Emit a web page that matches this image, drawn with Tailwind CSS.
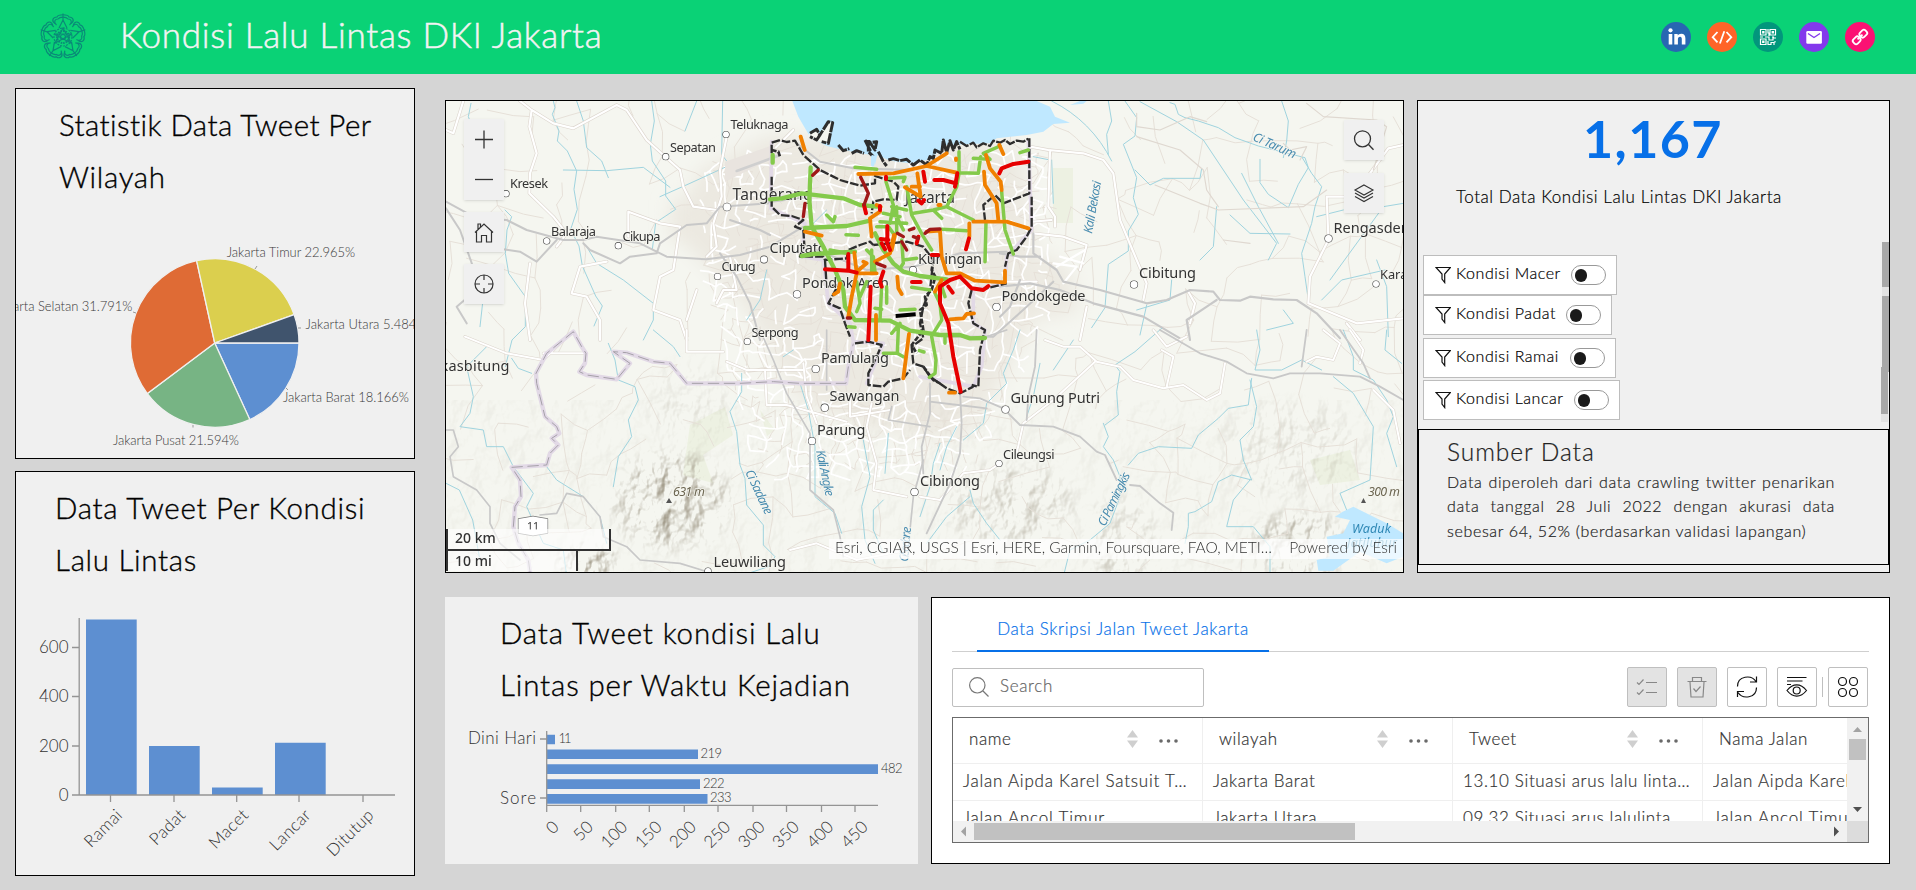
<!DOCTYPE html>
<html lang="id">
<head>
<meta charset="utf-8">
<title>Kondisi Lalu Lintas DKI Jakarta</title>
<script src="https://cdn.jsdelivr.net/npm/@tailwindcss/browser@4"></script>
</head>
<body class="h-[890px] w-[1916px] overflow-hidden bg-[#d5d5d5] font-['Lato','Open_Sans',sans-serif] font-light text-black [-webkit-text-stroke:0.2px]">

<header class="flex h-[74px] items-center bg-[#0ad276] pl-[39px] pr-[41px]">
  <svg class="h-12 w-12" viewBox="-24 -24 48 48" fill="none" stroke="#0a8a78" stroke-width="1.200">
    <g id="petals">
      <path d="M-8,-13.500 C-12,-16 -10,-20 -6,-20 C-5,-23 5,-23 6,-20 C10,-20 12,-16 8,-13.500"/><path d="M-6.500,-12 C-10,-15 -8,-18 -5,-18 C-3,-20.500 3,-20.500 5,-18 C8,-18 10,-15 6.500,-12"/>
      <path d="M0,-23.500 V-15 M-4,-9 L0,-17 L4,-9"/>
    </g>
    <use href="#petals" transform="rotate(72)"/><use href="#petals" transform="rotate(144)"/><use href="#petals" transform="rotate(216)"/><use href="#petals" transform="rotate(288)"/>
    <circle r="9" stroke-dasharray="2 1"/><circle r="6" stroke-dasharray="1.500 1" stroke-width="2"/><circle r="2.500"/>
    <path d="M0,-9 L8,6 L-9,-3 H9 L-8,6Z"/>
  </svg>
  <h1 class="-mt-[6px] ml-[33px] text-[35px] leading-[42px] tracking-[0.730px] text-[#f3f3f3] [-webkit-text-stroke:0.5px]">Kondisi Lalu Lintas DKI Jakarta</h1>
  <nav class="ml-auto flex gap-4">
    <svg class="size-[30px]" viewBox="0 0 30 30"><circle cx="15" cy="15" r="15" fill="#2867b2"/><circle cx="9.500" cy="8.300" r="2.100" fill="#fff"/><path fill="#fff" d="M7.700 12h3.600v10.500H7.700zM13.300 12h3.400v1.500c.7-1.100 1.900-1.800 3.500-1.800 3 0 4.200 1.900 4.200 4.900v5.900h-3.600v-5.400c0-1.500-.4-2.400-1.700-2.400-1.500 0-2.200 1-2.200 2.500v5.300h-3.600z"/></svg>
    <svg class="size-[30px]" viewBox="0 0 30 30" fill="none" stroke="#fff" stroke-width="1.800"><circle cx="15" cy="15" r="15" fill="#ff6428" stroke="none"/><path d="M10.500 10 5.700 15.200 10.500 20.400M19.500 10l4.800 5.200-4.800 5.200M17.300 9.200l-4.400 12.300"/></svg>
    <svg class="size-[30px]" viewBox="0 0 30 30" fill="none" stroke="#fff" stroke-width="1.200"><circle cx="15" cy="15" r="15" fill="#02967c" stroke="none"/><path d="M7.500 7.500h5.500v5.500H7.500zM17 7.500h5.500v5.500H17zM7.500 17H13v5.500H7.500zM9.700 9.700h1.200v1.200H9.700zM19.200 9.700h1.200v1.200h-1.200zM9.700 19.200h1.200v1.200H9.700zM15 7v4h1v3M7 15h3M12 15h4v3h4v-2h3M15 19v3.500h3v-2h3v2.500M19 15h2M22 19v1.500"/></svg>
    <svg class="size-[30px]" viewBox="0 0 30 30"><circle cx="15" cy="15" r="15" fill="#8338ec"/><rect x="7.300" y="9" width="15.600" height="12.800" rx="1.300" fill="#fff"/><path d="M9 11.500l6 4 6-4" fill="none" stroke="#8338ec" stroke-width="1.400"/></svg>
    <svg class="size-[30px]" viewBox="0 0 30 30" fill="none" stroke="#fff" stroke-width="1.800"><circle cx="15" cy="15" r="15" fill="#fb1173" stroke="none"/><g transform="rotate(-45 15 15)"><rect x="6.500" y="12" width="7.600" height="6" rx="2.200"/><rect x="15.900" y="12" width="7.600" height="6" rx="2.200"/><path d="M11.500 15h7"/></g></svg>
  </nav>
</header>

<main class="flex pl-[15px]">
  <section class="mt-[14px] flex w-[400px] flex-col gap-3">
    <article class="h-[371px] overflow-hidden border border-black bg-[#f0f0f0]">
      <h2 class="h-[113px] pl-[43px] pt-[10px] text-[29.5px] leading-[52px] tracking-[0.420px] [-webkit-text-stroke:0.35px]">Statistik Data Tweet Per<br><span class="tracking-[0.650px]">Wilayah</span></h2>
      <svg class="block h-[256px] w-[398px]" viewBox="16 202 398 256">
        <g stroke="#f0f0f0" stroke-width="1.300">
          <path fill="#5d8fd1" d="M214.700,343 L299,343 A84.300,84.300 0 0 1 249.800,419.600Z"/>
          <path fill="#77b484" d="M214.700,343 L249.800,419.600 A84.300,84.300 0 0 1 147.300,393.600Z"/>
          <path fill="#df6b35" d="M214.700,343 L147.300,393.600 A84.300,84.300 0 0 1 196.600,260.700Z"/>
          <path fill="#dbcf4e" d="M214.700,343 L196.600,260.700 A84.300,84.300 0 0 1 294.100,314.600Z"/>
          <path fill="#40546d" d="M214.700,343 L294.100,314.600 A84.300,84.300 0 0 1 299,343Z"/>
        </g>
        <path stroke="#999" fill="none" d="M255,269l2-3M298,328h3M286,388l2,2M193,425v2.500M136,313l-3-1"/>
        <g font-size="13" fill="#3a3a3a" stroke="none">
          <text x="226.700" y="257" textLength="128.500">Jakarta Timur 22.965%</text>
          <text x="305.500" y="329" textLength="121">Jakarta Utara 5.484%</text>
          <text x="283" y="402" textLength="126">Jakarta Barat 18.166%</text>
          <text x="113" y="445" textLength="126">Jakarta Pusat 21.594%</text>
          <text x="132.500" y="311" text-anchor="end" textLength="137">Jakarta Selatan 31.791%</text>
        </g>
      </svg>
    </article>
    <article class="h-[405px] overflow-hidden border border-black bg-[#f0f0f0]">
      <h2 class="h-[113px] pl-[39px] pt-[10px] text-[29.5px] leading-[52px] tracking-[0.700px] [-webkit-text-stroke:0.35px]">Data Tweet Per Kondisi<br>Lalu Lintas</h2>
      <svg class="block h-[290px] w-[398px]" viewBox="16 585 398 290">
        <path fill="#5d8fd1" d="M86,619.500h50.700V795H86zM149,746h50.700v49H149zM212,787.500h50.700v7.500H212zM275,742.700h50.700V795H275z"/>
        <path stroke="#949494" fill="none" stroke-width="1.300" d="M79.200,618V795M72,795H395M72,647.500h7M72,696.500h7M72,746h7M110.500,795v7M174,795v7M236.700,795v7M299,795v7M363,795v7"/>
        <g font-size="17" fill="#333" stroke="none" text-anchor="end">
          <text x="68.500" y="653.300">600</text><text x="68.500" y="702.300">400</text><text x="68.500" y="751.500">200</text><text x="68.500" y="801">0</text>
          <g letter-spacing="0.350">
          <text transform="translate(123.500 816) rotate(-45)">Ramai</text>
          <text transform="translate(186.500 816) rotate(-45)">Padat</text>
          <text transform="translate(249.500 816) rotate(-45)">Macet</text>
          <text transform="translate(312 816) rotate(-45)">Lancar</text>
          <text transform="translate(375 816) rotate(-45)">Ditutup</text>
          </g>
        </g>
      </svg>
    </article>
  </section>

  <div class="ml-[30px] mt-[26px] grid grid-cols-[473px_13px_473px_13px_473px] content-start gap-y-6">
    <section class="relative col-span-3 h-[473px] overflow-hidden border border-black bg-[#f5f6f0] [-webkit-text-stroke:0]">
      <svg id="map" class="block h-[471px] w-[957px] font-normal" viewBox="446 101 957 471" fill="none" stroke-linejoin="round" stroke-linecap="round">
        <defs>
          <filter id="relief" x="-10%" y="-10%" width="120%" height="120%" color-interpolation-filters="sRGB">
            <feTurbulence type="fractalNoise" baseFrequency="0.045 0.030" numOctaves="4" seed="7" result="n"/>
            <feColorMatrix in="n" type="matrix" values="0 0 0 0 0 0 0 0 0 0 0 0 0 0 0 1 0 0 0 0" result="h"/>
            <feDiffuseLighting in="h" surfaceScale="11" lighting-color="#fff" result="l"><feDistantLight azimuth="225" elevation="58"/></feDiffuseLighting>
            <feColorMatrix in="l" type="matrix" values="0 0 0 0 .60 0 0 0 0 .57 0 0 0 0 .50 -1.300 0 0 0 1.080" result="s"/>
            <feComposite in="s" in2="SourceGraphic" operator="in"/>
          </filter>
          <radialGradient id="hill"><stop offset="0" stop-color="#000"/><stop offset=".6" stop-color="#000" stop-opacity=".8"/><stop offset="1" stop-color="#000" stop-opacity="0"/></radialGradient>
          <filter id="soft"><feGaussianBlur stdDeviation="9"/></filter>
        </defs>
        <g fill="#ece9e1" filter="url(#soft)">
          <path d="M700,170 L770,135 L1020,145 L1035,250 L1040,310 L990,400 L960,440 L870,430 L800,400 L740,300 L670,230Z"/>
          <path d="M670,200h60v40h-60zM1040,250l30,20l10,40l-40,10z"/>
        </g>
        <g fill="#e9f0dc"><path d="M690,425l35,-18l8,28l-30,20l10,28l-30,-8zM760,410l15,20l-8,6zM1053,168h20v55h-20zM1310,460l40,-10l10,30l-40,5z" opacity=".7"/></g>
        <g filter="url(#relief)">
          <ellipse cx="672" cy="500" rx="68" ry="58" fill="url(#hill)"/>
          <ellipse cx="588" cy="562" rx="36" ry="22" fill="url(#hill)"/>
          <ellipse cx="1010" cy="505" rx="75" ry="50" fill="url(#hill)" opacity=".5"/>
          <ellipse cx="1120" cy="540" rx="45" ry="50" fill="url(#hill)" opacity=".4"/>
          <ellipse cx="1300" cy="545" rx="60" ry="40" fill="url(#hill)" opacity=".8"/>
          <ellipse cx="1290" cy="450" rx="80" ry="60" fill="url(#hill)" opacity=".25"/>
          <ellipse cx="690" cy="400" rx="50" ry="50" fill="url(#hill)" opacity=".2"/>
          <rect x="446" y="400" width="957" height="172" fill="#000" opacity=".08"/>
        </g>
        <g id="rural" stroke="#e6e0d8" stroke-width="1"></g>
        <g id="urban" stroke="#fff" stroke-width="1.700"></g>

        <!-- north-west -->
        <g transform="translate(440 90) scale(.33333)">
          <g stroke="#9fd3de" stroke-width="3">
            <path d="M340,33 l5,20 l-8,20 l20,50 l-5,30 l30,30 l28,60 l-8,55 l10,60 l-20,60 l25,50 l10,60 l40,90 l20,30 l-25,60 M410,33 l20,60 l10,80 l45,40 l20,50 M635,33 l8,60 l-12,70 l6,50 l40,60 l0,45 l30,40 l-60,40 l-10,80 M770,33 l-35,90 M848,33 l-3,160 l15,20 M105,130 l-20,-50 l8,-40 M195,360 l20,20 l-14,40 l-5,70 l10,60 l50,70 l0,90 l-40,40 l-20,80 M370,240 l130,2 l110,-10 l80,60 M660,320 l90,-40 l120,-55 M110,540 l20,80 l-10,90 M1100,420 l60,-60 M980,540 l-20,90 l-40,60 M440,470 l30,50 l80,50 l90,70 l0,50 l-30,60"/>
          </g>
          <g stroke="#dcd5cd" stroke-width="10"><path d="M18,120 L40,130 L70,33 M240,33 L275,60 L268,110 L290,190 L270,250 L268,310 L340,380 L380,430 M275,60 L340,100 L400,115 L530,45 L560,60 L620,150 L720,240 L730,290 L760,350 L830,360 M860,140 L840,240 L845,320 L820,400 L830,470 L800,500 M380,430 L350,470 M660,400 L565,365 V440 M660,400 L720,410 L700,540 L660,560 L640,660 L720,690 L740,750 M500,515 L420,530 L395,610 L440,620 L480,690 L480,750 M270,750 L255,640 L270,520 M770,600 L740,690 M870,500 L890,600 L850,600 L830,640 M1060,120 L980,200 L900,220"/></g>
          <g stroke="#fff" stroke-width="6.500"><path d="M18,120 L40,130 L70,33 M240,33 L275,60 L268,110 L290,190 L270,250 L268,310 L340,380 L380,430 M275,60 L340,100 L400,115 L530,45 L560,60 L620,150 L720,240 L730,290 L760,350 L830,360 M860,140 L840,240 L845,320 L820,400 L830,470 L800,500 M380,430 L350,470 M660,400 L565,365 V440 M660,400 L720,410 L700,540 L660,560 L640,660 L720,690 L740,750 M500,515 L420,530 L395,610 L440,620 L480,690 L480,750 M270,750 L255,640 L270,520 M770,600 L740,690 M870,500 L890,600 L850,600 L830,640 M1060,120 L980,200 L900,220"/></g>
          <g stroke="#c8c8c8" stroke-width="6"><path d="M18,335 L110,385 L200,390 L260,420 L370,450 L430,450 L470,440 L600,460 L680,500 L800,508 L900,495 L990,470 L1090,410 M170,475 L240,485 L290,515 L350,450 M430,460 L450,480 L540,520 L570,500 L650,490 L660,460 L740,405 L800,400 L840,350 L990,340 M840,490 L890,560 L930,640 L960,750 M870,390 L960,420 L990,435 M18,355 L60,420 L120,590 L50,650 L80,700"/></g>
          <path d="M855,215 L1000,165 L1020,195 L855,275Z" fill="#e9e4df"/><path d="M890,243 L1015,197" stroke="#cfcfcf" stroke-width="8"/>
        </g>
        <!-- south-west -->
        <g transform="translate(440 330) scale(.33333)">
          <g stroke="#9fd3de" stroke-width="3">
            <path d="M140,50 l-60,60 l20,90 l-10,50 l-30,40 l70,10 l10,50 l50,0 l30,60 l60,80 l-20,40 l50,110 l60,20 l10,80 M215,85 l20,30 l40,15 M505,40 l20,50 l10,60 l50,20 l10,40 l-30,60 l10,50 l-40,60 l-15,90 M640,0 l60,50 l20,30 M320,410 l30,40 l80,50 l50,60 l20,80 M905,130 v55 l-35,60 l20,60 l10,100 l15,40 l5,80 l50,60 l0,60 l35,35 l-20,30 l-90,30 l-20,70 M1080,160 l25,80 l20,110 l0,150 l60,50 l20,60 M1270,330 l20,110 l-25,90 l10,100 l30,70 M1345,310 l-10,120 M1330,510 l-30,30 l0,60 l30,70 M18,460 l40,20 l40,90 l20,110 M1060,60 l-30,20"/>
          </g>
          <g stroke="#dcd5cd" stroke-width="9"><path d="M75,20 L200,70 L310,90 L390,10 M310,70 H440 M740,0 V65 H850 M860,95 L920,120 H1090 M975,120 L980,225 H1040 L1220,275 M1295,220 L1280,290 L1310,400 L1300,480 L1400,500 M1050,660 L1130,640 L1250,690 L1400,660 M1090,100 L1100,200 L1130,280 M1230,200 V260 L1350,240"/></g>
          <g stroke="#fff" stroke-width="6"><path d="M75,20 L200,70 L310,90 L390,10 M310,70 H440 M740,0 V65 H850 M860,95 L920,120 H1090 M975,120 L980,225 H1040 L1220,275 M1295,220 L1280,290 L1310,400 L1300,480 L1400,500 M1050,660 L1130,640 L1250,690 L1400,660 M1090,100 L1100,200 L1130,280 M1230,200 V260 L1350,240"/></g>
          <g stroke="#c8c8c8" stroke-width="5"><path d="M18,300 H40 L55,350 L30,380 L40,440 L110,480 L150,530 V580 L180,640 L240,690 M300,555 L350,550 L380,490 L430,500 L480,560 L490,620 L560,650 L600,690 L720,700 L800,725 M960,0 L1000,90 L1040,190 L1110,310 L1110,480 L1180,540 L1200,620 L1210,680 M1160,0 V180 M1450,390 L1420,500 L1410,600 M1355,230 L1345,270 L1470,290"/></g>
          <path stroke="#e2d9e6" stroke-width="13" d="M270,725 L265,690 L235,640 L220,590 L225,530 L243,500 L240,450 L215,412 L320,405 L330,370 L355,345 L335,325 L358,310 L350,290 L315,260 L300,200 L290,160 L288,130 L320,70 L400,5 L425,50 L438,70 L435,100 L418,125 L440,135 L530,148 L570,100 L520,65 L560,68 L640,95 L690,100 L740,160 H900 L1000,155 L1080,160 H1218 L1225,110 L1240,40"/>
          <path stroke="#a5a0a8" stroke-width="3" stroke-dasharray="34 14" stroke-linecap="butt" d="M270,725 L265,690 L235,640 L220,590 L225,530 L243,500 L240,450 L215,412 L320,405 L330,370 L355,345 L335,325 L358,310 L350,290 L315,260 L300,200 L290,160 L288,130 L320,70 L400,5 L425,50 L438,70 L435,100 L418,125 L440,135 L530,148 L570,100 L520,65 L560,68 L640,95 L690,100 L740,160 H900 L1000,155 L1080,160 H1218 L1225,110 L1240,40"/>
        </g>
        <!-- north-east -->
        <g transform="translate(1000 90) scale(.33333)">
          <path fill="#bfe8ff" d="M210,45l30,-12h20l-10,8z"/>
          <g stroke="#9fd3de" stroke-width="3">
            <path d="M155,33 q120,60 180,180 M325,33 l10,60 l-15,40 l5,60 M375,33 l35,50 l-5,55 l-35,25 l40,100 l-10,60 l15,50 l-30,50 l0,60 l-60,40 l-10,130 l-40,60 M420,35 l110,60 l80,55 l120,180 l100,130 l-25,50 M510,38 l15,5 l10,30 l20,10 l40,10 l60,20 l50,30 l70,25 l80,20 l60,15 l10,30 l-30,50 l-30,70 l-60,-40 l-25,-35 l0,-70 M845,33 l20,60 l-5,60 l-10,50 M405,240 l45,45 l40,-20 h110 l5,-30 M725,250 l50,100 l60,110 M690,375 l60,55 l120,2 M650,350 l-10,120 l-40,40 M905,200 l30,50 l30,40 l-20,60 l-10,50 l-30,90 l10,70 l10,70 M965,630 l60,-60 l130,-30 M1210,340 l-60,10 l-160,220 M1130,510 l30,80 l5,150 M950,380 l80,-20 M155,210 l5,130 M100,200 l50,10 M440,645 l-20,90 M515,570 l-5,60 l-100,30 M800,720 l80,-20 l-30,-40"/>
          </g>
          <g stroke="#dcd5cd" stroke-width="10"><path d="M90,170 L145,180 L250,190 L310,210 L340,250 L360,390 L410,510 L440,580 L430,630 M150,180 L145,350 L165,380 V410 M100,430 L190,440 L260,465 L240,540 M110,250 M985,440 L980,320 H1040 M1110,250 L1165,175 L1210,165 M985,450 L960,500 L930,560 L925,640 M925,640 L1070,700 L1210,685 M565,605 L585,640 L570,700 M100,395 L155,390 M0,575 H110 M240,750 L260,650 M1040,700 L1080,750"/></g>
          <g stroke="#fff" stroke-width="6.500"><path d="M90,170 L145,180 L250,190 L310,210 L340,250 L360,390 L410,510 L440,580 L430,630 M150,180 L145,350 L165,380 V410 M100,430 L190,440 L260,465 L240,540 M985,440 L980,320 H1040 M1110,250 L1165,175 L1210,165 M985,450 L960,500 L930,560 L925,640 M925,640 L1070,700 L1210,685 M565,605 L585,640 L570,700 M100,395 L155,390 M0,575 H110 M240,750 L260,650 M1040,700 L1080,750 M170,530 L255,480 M180,500 L250,520 M160,520 L230,530 L190,580"/></g>
          <g stroke="#c8c8c8" stroke-width="6.500"><path d="M0,590 L90,580 L180,600 L280,640 L430,680 L540,745 M100,430 V490 L170,540 L190,575 L300,600 L440,640 L500,630 L570,600 L640,605 L660,630 L720,632 L750,620 L820,628 L890,630 L950,670 L1020,745 M570,750 L560,690 L650,630 M0,490 L60,500 L120,500 M60,570 L30,650 L0,680"/></g>
          <g stroke="#dfd8d0" stroke-width="3.500"><path d="M465,285 L600,340 L655,360 L910,350 L980,300 M410,110 L480,120 L570,80 L620,95 M410,140 L540,180 L610,240 L620,300 L655,350 M920,40 L970,80 L1130,90 L1160,110 L1120,240 M410,70 V110 M670,450 L750,460 M850,160 L870,180 L920,170 L900,210"/></g>
        </g>
        <!-- south-east -->
        <g transform="translate(920 330) scale(.33333)">
          <g stroke="#9fd3de" stroke-width="3">
            <path d="M300,0 l-20,60 l-30,70 l10,30 l-60,60 l-10,60 l-60,50 M360,100 l-20,100 l-20,60 M550,280 l15,40 l-15,30 l30,40 l20,50 l0,60 l-30,80 l-60,50 l-60,30 l-20,80 M555,285 l40,-30 l-5,-70 l10,-60 l-15,-20 l60,-40 l80,-70 M625,405 l30,-35 l60,-20 l100,5 l20,-40 l60,-50 l30,-30 l60,-10 l10,-80 M990,150 l20,80 l-10,60 l-40,40 l10,60 l25,60 l-60,-15 l-40,20 l-20,60 l-50,30 l-20,5 l0,40 l-10,50 M990,450 l-50,60 l-20,80 l80,0 l50,60 l0,80 M1240,140 l60,50 l60,100 l-10,160 l-90,40 l20,50 M1010,0 l10,60 l-15,60 h80 l60,-30 l60,30 M1270,0 l30,80 l0,40 l60,30 l40,60 l20,50 l-20,50 l30,100 M1400,0 l-5,60 l50,40 M0,560 l30,-90 l10,-70 l20,-60 M110,290 l-30,60 l-20,70 M20,640 l60,-80 l70,-60 M150,480 l10,40 l40,60 l40,50 M460,30 l-60,90"/>
          </g>
          <g stroke="#dcd5cd" stroke-width="9"><path d="M375,30 L430,50 L480,50 L530,95 L600,110 L640,150 L730,175 L790,165 L860,210 L900,190 L915,100 M525,95 L400,210 L310,280 L290,370 M0,500 L60,510 L130,430 L210,420 L240,400 M725,60 L760,80 L740,170 M700,0 L740,50 L800,20 M1210,0 L1260,40 L1240,90 L1190,80 L1160,95 M1290,0 L1330,60 L1320,100 M1360,180 L1420,240 L1440,340"/></g>
          <g stroke="#fff" stroke-width="6"><path d="M375,30 L430,50 L480,50 L530,95 L600,110 L640,150 L730,175 L790,165 L860,210 L900,190 L915,100 M525,95 L400,210 L310,280 L290,370 M0,500 L60,510 L130,430 L210,420 L240,400 M725,60 L760,80 L740,170 M700,0 L740,50 L800,20 M1210,0 L1260,40 L1240,90 L1190,80 L1160,95 M1290,0 L1330,60 L1320,100 M1360,180 L1420,240 L1440,340"/></g>
          <g stroke="#c8c8c8"><path stroke-width="5.500" d="M720,0 L840,70 L920,95 L980,130 L1060,145 L1110,130 L1200,130 L1320,140 L1380,170 L1450,210 M120,185 L125,280 L120,370 L90,460 L20,610 M30,215 L200,235 M130,200 L180,205 L250,235 L300,285 L400,290 L480,320 L530,365 L555,375 L590,450 M630,465 L660,468 L720,520 L760,548 L755,600 M1260,0 L1330,100 L1350,145 M1160,0 L1145,110 M30,160 V250 L5,350 L10,430 M260,0 L200,20 M350,0 L345,110 L325,200 L320,270"/></g>
          <path fill="#bfe8ff" d="M1268,545 L1300,530 L1350,555 L1400,580 L1450,610 V680 L1400,700 L1320,665 L1240,722 H1195 L1190,690 L1230,680 L1220,620 L1270,610 L1290,570 L1245,560Z"/>
        </g>
        <!-- Jakarta -->
        <g transform="translate(760 90) scale(.33333)">
          <path fill="#bfe8ff" d="M97,33 L115,80 L150,140 L200,168 L250,180 L300,190 L335,195 L345,225 L352,195 L390,212 L450,220 L500,210 L530,190 L560,165 L690,160 L710,145 L800,135 L850,125 L880,102 L930,98 L885,80 L870,50 L830,33Z"/>
          <path fill="#f5f6f0" d="M165,150L205,95L218,98L205,160L185,158ZM145,135L165,118L182,135L172,152Z"/>
          <g stroke="#e2d9e6" stroke-width="11"><path d="M35,155 L32,355 L135,400 L125,500 L190,510 L205,640 L270,700 L280,755 L370,760 L320,880 M805,150 L815,420 L740,500 L735,580 L640,600 L640,700 L675,720 L665,830 L640,890 L480,860"/></g>
          <g stroke="#c8c8c8" stroke-width="6"><path d="M110,160 L180,215 L280,235 L450,240 M0,340 L150,320 M170,480 L320,540 L460,530 L600,490 L740,485 M560,740 L700,740 L800,650 L880,575"/></g>
          <g stroke="#2e2e2e" stroke-linecap="butt">
            <path stroke-width="7" stroke-dasharray="26 6" d="M35,190 V158 L60,150 L80,156 L105,152 L130,195 L180,240 L240,270 L300,287 L345,280 V258 L400,275 L415,290 L410,330 L370,328 L340,335 L335,370 M35,260 V350 L60,375 L95,378 L130,390 L105,410 L130,420 L133,465 L120,500 L190,500 L195,510 L260,505 L265,480 L300,465 L330,455 L340,465 M195,510 L200,590 L235,585 L205,640 L240,655 L255,700 L270,740 M285,760 L325,755 L365,765 L350,800 L325,850 L325,885 L370,890 L385,875 L430,865 L450,840 M340,465 L440,455 L490,470 L520,510 L510,600 L490,650 L480,700 L490,745 L455,770 L460,820 L490,830 L510,860 L560,895 L600,910 L640,890 M635,600 L625,640 L640,700 L675,720 L660,780 L655,890 L635,885 M808,145 V310 L730,340 L705,315 L670,345 L675,390 M815,320 L815,410 L800,440 L770,480 L745,490 L735,530 M660,600 L740,580"/>
            <path stroke-width="9" stroke-dasharray="34 3" d="M150,130 L170,118 L180,135 L170,150 L150,140 M170,150 L205,95 L218,98 L205,160 L185,155 M235,165 L250,182 L268,176 M275,190 L290,182 L312,190 M315,150 L330,180 L320,160 L350,155 L345,180 L325,150 V185 L340,200 M355,185 L370,215 L380,228 M385,210 L400,206 L420,212 L440,208 L460,225 L480,210 L500,225 L510,200 L520,205 L525,180 L545,190 L550,150 L560,188 L570,152 L580,180 L590,155 L600,178"/>
            <path stroke-width="7" stroke-dasharray="30 4" d="M600,155 L620,168 L640,158 L650,172 L670,160 L690,168 L700,152 L720,158 L735,150 L750,162 L770,152 L790,155 L805,146"/>
            <path stroke-width="8" stroke-dasharray="15 5" d="M520,510 L515,540 L526,560 L515,600 L495,620 L500,645 L480,660 L490,720 L455,765 L470,790 M35,180 L55,185 L60,200 M490,830 L520,870 L540,880"/>
          </g>
          <path stroke="#bfe8ff" stroke-width="10" d="M338,200 V225"/>
        </g>

        <g id="places" font-family="Noto Sans, sans-serif" fill="#333" stroke="#f5f5ef" stroke-width="1.600" paint-order="stroke" font-size="14.500">
          <g fill="#fff" stroke="#444" stroke-width="1.200">
            <circle cx="726" cy="134.500" r="3"/><circle cx="665.700" cy="156.700" r="3"/><circle cx="506" cy="193.700" r="3"/><circle cx="546.700" cy="241" r="3"/><circle cx="618.300" cy="245.700" r="3"/><circle cx="727" cy="207" r="3.700"/><circle cx="764" cy="259.500" r="3.300"/><circle cx="717.500" cy="276.500" r="3"/><circle cx="797" cy="294.300" r="3.500"/><circle cx="747.300" cy="341.500" r="3"/><circle cx="815.700" cy="369" r="3.500"/><circle cx="824.700" cy="407.700" r="3.500"/><circle cx="812" cy="441" r="3.500"/><circle cx="996.500" cy="307" r="3.500"/><circle cx="1005.500" cy="409.500" r="3.500"/><circle cx="999" cy="463.500" r="3"/><circle cx="914.500" cy="492" r="3.500"/><circle cx="1134" cy="284.500" r="3.500"/><circle cx="1328.500" cy="238.500" r="3.500"/><circle cx="1376" cy="284" r="3"/><circle cx="913" cy="270" r="3.300"/><circle cx="708" cy="571" r="3"/>
          </g>
          <g font-size="12.800">
            <text x="730.500" y="129" textLength="58">Teluknaga</text><text x="670" y="151.500" textLength="46">Sepatan</text><text x="510" y="188" textLength="38">Kresek</text><text x="551" y="235.500" textLength="45">Balaraja</text><text x="622.500" y="240.500" textLength="38">Cikupa</text><text x="721.500" y="271" textLength="34">Curug</text><text x="751.500" y="336.500" textLength="47">Serpong</text><text x="1003" y="458.500" textLength="51.500">Cileungsi</text><text x="1380" y="279">Karawang</text>
          </g>
          <text x="732.500" y="200" textLength="80" font-size="15.500">Tangerang</text>
          <text x="769.500" y="253" textLength="57">Ciputato</text>
          <text x="802" y="288" textLength="87">Pondok Aren</text>
          <text x="905" y="203" textLength="50" font-size="15.500">Jakarta</text>
          <text x="918" y="264" textLength="64">Kuningan</text>
          <text x="1001.500" y="300.500" textLength="84">Pondokgede</text>
          <text x="821" y="363" textLength="68">Pamulang</text>
          <text x="829.500" y="401" textLength="70">Sawangan</text>
          <text x="817" y="434.500" textLength="48.500">Parung</text>
          <text x="920" y="486" textLength="60">Cibinong</text>
          <text x="1010.500" y="403" textLength="89.500">Gunung Putri</text>
          <text x="1139" y="278" textLength="57">Cibitung</text>
          <text x="1333.500" y="232.500">Rengasdengklok</text>
          <text x="440.500" y="370.500" textLength="69">kasbitung</text>
          <text x="713.500" y="566.500" textLength="72.500">Leuwiliang</text>
          <g font-style="italic" fill="#4a8db0" font-size="12.500">
            <text transform="translate(1252 140) rotate(24)" textLength="46">Ci Tarum</text>
            <text transform="translate(1092 234) rotate(-80)" textLength="53">Kali Bekasi</text>
            <text transform="translate(816 451) rotate(78)" textLength="47">Kali Angke</text>
            <text transform="translate(745 472) rotate(65)" textLength="48">Ci Sadane</text>
            <text transform="translate(1105 527) rotate(-64)" textLength="58">Ci Pamingkis</text>
            <text transform="translate(908 562) rotate(-85)" textLength="35">Ci Sadane</text>
            <text x="1352" y="533" textLength="39" fill="#2f88b5" stroke="none">Waduk</text>
            <text x="1347" y="547" textLength="50" fill="#2f88b5" stroke="none">Jatiluhur</text>
          </g>
          <g font-style="italic" fill="#6b6550" font-size="12.500"><text x="673" y="496" textLength="32">631 m</text><text x="1368" y="496" textLength="32">300 m</text></g>
          <path fill="#555" stroke="none" d="M666,503l3,-5l3,5zM1361,503l2.500,-5l2.500,5z"/>
          <path d="M518.500,519 L533,516.500 L547.500,519 V533 L533,535.500 L518.500,533Z" fill="#fff" stroke="#777" stroke-width="1.300"/>
          <text x="527" y="530" font-size="10.500" stroke="none">11</text>
        </g>

        <!-- traffic segments -->
        <g transform="translate(760 90) scale(.33333)" stroke-linecap="round">
          <g stroke="#84ca4b" stroke-width="13">
            <path d="M38,195 V218 M152,232 L148,330 L155,410 L190,470 L225,540 L250,600 L255,650 L285,690 L390,692 L450,722 L540,735 L600,735 L630,745 L675,744 M30,328 L65,325 L125,310 L250,325 L300,345 L350,350 M135,414 L260,408 L330,392 M125,498 L160,492 L285,485 M345,430 L370,480 L400,520 L430,545 L480,558 L560,568"/>
            <path stroke-width="10.500" d="M285,232 L350,238 M200,375 L220,395 L225,380 M258,434 L295,436 M385,265 L435,262 L430,275 M378,275 L400,345 L390,400 M440,290 L455,375 L490,440 L515,480 M460,370 L520,360 L560,350 L640,390 M520,360 L545,385 M560,350 L590,290 L597,250 V185 M597,248 L655,250 L662,200 M640,205 L690,208 L670,190 L720,168 M780,188 L805,180 M725,305 L735,420 L760,492 M678,395 L675,515 M395,350 L440,360 M370,370 L420,380 M360,395 L440,400 M400,360 L430,420 M410,350 V430 M545,418 L620,422 M350,410 L385,410 L400,430 M425,450 L430,520 L420,535 M430,510 L470,505 M455,592 L510,600 M525,610 L540,640 L545,690 L520,730 M515,740 L528,810 L525,850 L508,862 M555,740 V760 M545,590 L555,620 M478,782 L492,786 M420,660 L465,658 M415,715 L412,790 L370,790 M395,730 L420,700 M412,790 L430,800 M320,480 L340,500 L345,545 M290,575 L300,640 L290,665 M365,590 L360,690 M380,590 V640 M345,655 L365,658 M265,710 L285,712 M320,575 L300,620 M210,480 L260,490 M335,480 V545"/>
          </g>
          <g stroke="#f08000" stroke-width="11.500">
            <path d="M122,140 L134,180 M295,252 L400,250 L500,228 L560,190 M500,228 L590,248 M472,250 L482,320 L435,292 M455,290 L480,290 M718,165 L730,192 M672,245 L675,285 L710,340 L715,390 M678,195 L690,235 L722,275 L725,300 M640,395 L740,395 L805,415 M588,205 V210 M330,385 L335,440 M330,385 L360,365 M350,345 L362,350 M135,425 L185,437 M240,580 L235,605 L222,613 M283,488 L290,550 L275,620 L265,680 M290,550 L350,550 M345,515 L390,490 L402,435 M310,515 L320,520 L290,545 M412,560 L415,595 L425,612 M348,675 V750 M447,732 L430,865 M500,425 L540,422 L545,500 L560,550 L600,550 L645,572 L735,577 V542 M545,570 L525,605 M570,688 L610,685 L620,672 L642,670 M567,908 L585,908 M628,400 L628,440 M535,345 H542 M405,435 L395,480"/>
          </g>
          <g stroke="#e60000" stroke-width="12">
            <path d="M718,250 L725,235 L760,222 L805,215 M490,245 L495,275 M523,270 L550,270 L588,280 M585,290 L592,250 M475,332 L485,340 L492,330 M378,260 V268 M312,345 L318,370 M360,348 V360 M382,408 V445 M365,460 L375,478 M380,455 L390,480 M362,447 L385,450 M475,440 L470,460 M627,445 L618,478 M515,495 H535 M456,576 H482 M265,492 V542 L195,538 M265,542 L290,548 M332,590 L325,750 M370,545 L360,575 L365,590 M600,560 L570,570 L540,590 L540,640 L565,700 L580,800 L602,905 M600,560 L635,595 L670,600 L685,588 M565,590 L578,608"/>
          </g>
          <g stroke="#a01818" stroke-width="10"><path d="M158,256 L175,240 M302,262 L325,310 L312,345 M135,340 L130,380 M412,430 L430,440 M425,455 L440,480 M448,420 L462,415 M495,430 L510,418 L540,417 M460,440 L475,445 M350,520 L375,530 M262,684 H272"/></g>
          <path stroke="#000" stroke-width="12" stroke-linecap="butt" d="M407,678 L467,673"/>
        </g>
      </svg>

      <div class="absolute left-[18px] top-[18px] flex h-[81px] w-10 flex-col items-center bg-[#f0f0f0] shadow">
        <svg class="size-10" viewBox="0 0 40 40" stroke="#333" stroke-width="1.300"><path d="M11 20.500h18M20 11.500v18"/></svg>
        <svg class="size-10" viewBox="0 0 40 40" stroke="#333" stroke-width="1.300"><path d="M11 20.500h18"/></svg>
      </div>
      <svg class="absolute left-[18px] top-[111px] size-10 bg-[#f0f0f0] shadow" viewBox="0 0 40 40" fill="none" stroke="#333" stroke-width="1.200"><path d="M11 20.500 20 12l9 8.500M12.500 19.500V30h5v-6.500h5V30h5V19.500M14 17v-5h2.500v3"/></svg>
      <svg class="absolute left-[18px] top-[163px] size-10 bg-[#f0f0f0] shadow" viewBox="0 0 40 40" fill="none" stroke="#333" stroke-width="1.200"><circle cx="20" cy="20" r="9"/><path d="M20 11v5M20 24v5M11 20h5M24 20h5"/></svg>
      <svg class="absolute right-[19px] top-[19px] size-10 bg-[#f0f0f0] shadow" viewBox="0 0 40 40" fill="none" stroke="#333" stroke-width="1.300"><circle cx="18.500" cy="18.800" r="8"/><path d="M24.500 24.500 29.500 29.800"/></svg>
      <svg class="absolute right-[19px] top-[72px] size-10 bg-[#f0f0f0] shadow" viewBox="0 0 40 40" fill="none" stroke="#333" stroke-width="1.100"><path d="M20 12 29 17 20 22 11 17ZM11 20l9 5 9-5M11 23.500l9 5 9-5"/></svg>

      <div class="absolute left-0 top-[428px] font-['Noto_Sans',sans-serif] text-[14px] font-medium leading-[17px] text-[#323232]">
        <div class="h-[22px] w-[165px] border-2 border-t-0 border-[#323232] bg-white/60 pl-[7px]">20 km</div>
        <div class="-mt-[2px] h-[22px] w-[132px] border-x-2 border-t-2 border-[#323232] bg-white/60 pl-[7px] pt-px">10 mi</div>
      </div>
      <div class="absolute bottom-[13px] right-0 flex h-5 w-[574px] justify-between bg-white/70 pl-1.5 pr-[6px] text-[15.500px] leading-[17px] text-[#323232]">
        <span class="tracking-[-0.020px]">Esri, CGIAR, USGS | Esri, HERE, Garmin, Foursquare, FAO, METI…</span>
        <span class="tracking-[0.050px]">Powered by Esri</span>
      </div>
    </section>

    <section class="relative col-start-5 flex h-[473px] flex-col border border-black bg-[#f0f0f0]">
      <p class="h-[94px] pl-[165px] pt-[7px] text-[52px] font-bold leading-[60px] tracking-[1.400px] text-[#0770e8] [-webkit-text-stroke:0]">1,167</p>
      <p class="-mt-[8px] h-[68px] pl-[38px] text-[17px] leading-5 tracking-[0.560px]">Total Data Kondisi Lalu Lintas DKI Jakarta</p>
      <div class="flex h-[174px] flex-col items-start pl-[5px] text-base tracking-[0.540px]">
        <div class="flex h-10 w-[194px] items-center border border-[#bdbdbd] bg-white pl-[11px]"><svg class="h-[18px] w-4" viewBox="0 0 16 18" fill="none" stroke="#111" stroke-width="1.200"><path d="M1 1.500h14.400L9.700 8v8.500L7 13V8Z"/></svg><span class="-mt-1 ml-[5px]">Kondisi Macer</span><i class="ml-auto mr-[10px] flex h-5 w-[35px] items-center rounded-full border border-[#999] pl-[3px]"><b class="h-[13px] w-3 rounded-full bg-[#1a1a1a]"></b></i></div>
        <div class="flex h-10 w-[189px] items-center border border-[#bdbdbd] bg-white pl-[11px]"><svg class="h-[18px] w-4" viewBox="0 0 16 18" fill="none" stroke="#111" stroke-width="1.200"><path d="M1 1.500h14.400L9.700 8v8.500L7 13V8Z"/></svg><span class="-mt-1 ml-[5px]">Kondisi Padat</span><i class="ml-auto mr-[10px] flex h-5 w-[35px] items-center rounded-full border border-[#999] pl-[3px]"><b class="h-[13px] w-3 rounded-full bg-[#1a1a1a]"></b></i></div>
        <div class="mt-[3px] flex h-10 w-[193px] items-center border border-[#bdbdbd] bg-white pl-[11px]"><svg class="h-[18px] w-4" viewBox="0 0 16 18" fill="none" stroke="#111" stroke-width="1.200"><path d="M1 1.500h14.400L9.700 8v8.500L7 13V8Z"/></svg><span class="-mt-1 ml-[5px]">Kondisi Ramai</span><i class="ml-auto mr-[10px] flex h-5 w-[35px] items-center rounded-full border border-[#999] pl-[3px]"><b class="h-[13px] w-3 rounded-full bg-[#1a1a1a]"></b></i></div>
        <div class="mt-[2px] flex h-10 w-[197px] items-center border border-[#bdbdbd] bg-white pl-[11px]"><svg class="h-[18px] w-4" viewBox="0 0 16 18" fill="none" stroke="#111" stroke-width="1.200"><path d="M1 1.500h14.400L9.700 8v8.500L7 13V8Z"/></svg><span class="-mt-1 ml-[5px]">Kondisi Lancar</span><i class="ml-auto mr-[10px] flex h-5 w-[35px] items-center rounded-full border border-[#999] pl-[3px]"><b class="h-[13px] w-3 rounded-full bg-[#1a1a1a]"></b></i></div>
      </div>
      <div class="h-[136px] border border-black pl-7 pr-[53px] pt-[8px] text-[#222]">
        <h3 class="text-[24.500px] leading-7 tracking-[0.950px]">Sumber Data</h3>
        <p class="mt-[4px] text-justify text-base leading-[24.400px] tracking-[0.650px]">Data diperoleh dari data crawling twitter penarikan data tanggal 28 Juli 2022 dengan akurasi data <span class="whitespace-nowrap">sebesar 64, 52% (berdasarkan validasi lapangan)</span></p>
      </div>
      <div class="absolute right-0 top-[141px] h-[54px] w-[7px] border-b-[9px] border-[#e3e3e3] bg-[#a8a8a8]"></div>
      <div class="absolute right-0 top-[195px] h-[76px] w-[7px] bg-[#a8a8a8]"></div>
      <div class="absolute right-px top-[266px] h-[55px] w-[7px] border-b-[8px] border-[#e3e3e3] bg-[#a8a8a8]"></div>
    </section>

    <section class="h-[267px] bg-[#f0f0f0]">
      <h2 class="h-[112px] pl-[55px] pt-[10px] text-[29.500px] leading-[52px] tracking-[0.850px] [-webkit-text-stroke:0.35px]">Data Tweet kondisi Lalu<br>Lintas per Waktu Kejadian</h2>
      <svg class="block h-[155px] w-[473px]" viewBox="445 709 473 155">
        <path fill="#5d8fd1" d="M547,734.700h8v9.600h-8zM547,749.500h151v9.500H547zM547,764.300h331v9.700H547zM547,779.200h153v9.800H547zM547,794h160.500v9.700H547z"/>
        <path stroke="#949494" fill="none" stroke-width="1.300" d="M546.700,731V812M546.700,805.400H878M540,739h7M540,798h7M580.700,805v7M615.700,805v7M649.300,805v7M684.300,805v7M718,805v7M753,805v7M786.500,805v7M821.500,805v7M855,805v7"/>
        <g fill="#333" stroke="none">
          <g font-size="17" text-anchor="end"><text x="536" y="744" textLength="68">Dini Hari</text><text x="536" y="803.700" textLength="36">Sore</text></g>
          <g font-size="13"><text x="558.500" y="743" textLength="13">11</text><text x="700.500" y="758.300" textLength="21.500">219</text><text x="881" y="773" textLength="21.500">482</text><text x="703" y="788" textLength="21.500">222</text><text x="710" y="802.300" textLength="21.500">233</text></g>
          <g font-size="17" text-anchor="end">
            <text transform="translate(560 828) rotate(-45)">0</text><text transform="translate(594.300 828) rotate(-45)">50</text><text transform="translate(628.600 828) rotate(-45)">100</text><text transform="translate(663 828) rotate(-45)">150</text><text transform="translate(697.300 828) rotate(-45)">200</text><text transform="translate(731.600 828) rotate(-45)">250</text><text transform="translate(766 828) rotate(-45)">300</text><text transform="translate(800.300 828) rotate(-45)">350</text><text transform="translate(834.600 828) rotate(-45)">400</text><text transform="translate(869 828) rotate(-45)">450</text>
          </g>
        </g>
      </svg>
    </section>

    <section class="col-span-3 col-start-3 h-[267px] border border-black bg-white pl-5 pr-5 text-[17px] text-[#333]">
      <div class="flex h-[54px] border-b border-[#cfcfcf] pl-[25px]"><div class="h-[54px] w-[292px] border-b-2 border-[#0770e8] pt-[17px] text-center leading-[27px] tracking-[0.640px] text-[#0770e8]">Data Skripsi Jalan Tweet Jakarta</div></div>
      <div class="mt-[15px] flex h-10 items-center">
        <div class="flex h-[39px] w-[252px] items-center rounded-[2px] border border-[#bfbfbf] pl-4 text-[#666]">
          <svg class="size-5" viewBox="0 0 20 20" fill="none" stroke="#777" stroke-width="1.200"><circle cx="8.300" cy="8.300" r="7.700"/><path d="m14 14 5.500 5.500"/></svg><span class="-mt-0.5 ml-[11px] tracking-[0.670px]">Search</span>
        </div>
        <div class="ml-auto flex items-center gap-[10px] pr-px">
          <svg class="size-10 rounded-[2px] border border-[#bfbfbf] bg-[#e3e3e3]" viewBox="0 0 38 38" fill="none" stroke="#888" stroke-width="1.200"><path d="m9 14.500 2 2 4.500-5M9 24.500l2 2 4.500-5M18 14.500h11M18 24.500h11"/></svg>
          <svg class="size-10 rounded-[2px] border border-[#bfbfbf] bg-[#e3e3e3]" viewBox="0 0 38 38" fill="none" stroke="#888" stroke-width="1.200"><path d="M9.500 13.500h19M14.500 13.500v-4h9v4M12 14l1 15h12l1-15M15.500 20.500l2.500 3 4.500-5"/></svg>
          <svg class="size-10 rounded-[2px] border border-[#bfbfbf]" viewBox="0 0 38 38" fill="none" stroke="#111" stroke-width="1.200"><path d="M9.500 18.500c0-11 14-12 18.500-5M28.500 8.500v5.500h-6.500M28.500 19.500c0 11-14 12-18.500 5M9.500 29v-5.500H16"/></svg>
          <svg class="size-10 rounded-[2px] border border-[#bfbfbf]" viewBox="0 0 38 38" fill="none" stroke="#111" stroke-width="1.200"><path d="M9 9.500h19.500M9 13h15.500M9 16.500h4M9 22.500c6-7.500 13.500-7.500 19.500 0-6 7.500-13.500 7.500-19.500 0Z"/><circle cx="18.700" cy="22.500" r="3.500"/></svg>
          <div class="-ml-[5px] h-5 w-px bg-[#bfbfbf]"></div>
          <svg class="-ml-[5px] size-10 rounded-[2px] border border-[#bfbfbf]" viewBox="0 0 38 38" fill="none" stroke="#111" stroke-width="1.200"><circle cx="13.500" cy="13.500" r="4"/><circle cx="24.500" cy="13.500" r="4"/><circle cx="13.500" cy="24.500" r="4"/><circle cx="24.500" cy="24.500" r="4"/></svg>
        </div>
      </div>
      <div class="mt-[10px] grid h-[126px] grid-cols-[894px_21px] grid-rows-[103px_21px] border border-[#6b6b6b] tracking-[0.600px]">
        <div class="grid grid-cols-[250px_250px_250px_144px] grid-rows-[46px_37px_20px] overflow-hidden whitespace-nowrap *:overflow-hidden *:border-[#efefef]">
          <div class="flex items-center border-b border-r pl-4"><span class="-mt-[3px]">name</span><svg class="-mt-1 ml-auto h-[18px] w-[11px]" viewBox="0 0 11 18" fill="#cfcfcf"><path d="M0 7.500 5.500 0 11 7.500zM0 10.500 5.500 18 11 10.500z"/></svg><svg class="ml-[21px] mr-6 h-1 w-[19px]" viewBox="0 0 19 4" fill="#6a6a6a"><circle cx="2" cy="2" r="1.800"/><circle cx="9.500" cy="2" r="1.800"/><circle cx="17" cy="2" r="1.800"/></svg></div>
          <div class="flex items-center border-b border-r pl-4"><span class="-mt-[3px]">wilayah</span><svg class="-mt-1 ml-auto h-[18px] w-[11px]" viewBox="0 0 11 18" fill="#cfcfcf"><path d="M0 7.500 5.500 0 11 7.500zM0 10.500 5.500 18 11 10.500z"/></svg><svg class="ml-[21px] mr-6 h-1 w-[19px]" viewBox="0 0 19 4" fill="#6a6a6a"><circle cx="2" cy="2" r="1.800"/><circle cx="9.500" cy="2" r="1.800"/><circle cx="17" cy="2" r="1.800"/></svg></div>
          <div class="flex items-center border-b border-r pl-4"><span class="-mt-[3px]">Tweet</span><svg class="-mt-1 ml-auto h-[18px] w-[11px]" viewBox="0 0 11 18" fill="#cfcfcf"><path d="M0 7.500 5.500 0 11 7.500zM0 10.500 5.500 18 11 10.500z"/></svg><svg class="ml-[21px] mr-6 h-1 w-[19px]" viewBox="0 0 19 4" fill="#6a6a6a"><circle cx="2" cy="2" r="1.800"/><circle cx="9.500" cy="2" r="1.800"/><circle cx="17" cy="2" r="1.800"/></svg></div>
          <div class="flex items-center border-b pl-4"><span class="-mt-[3px]">Nama Jalan</span></div>
          <div class="border-b border-r pl-[10px] leading-[34px] tracking-[0.780px]">Jalan Aipda Karel Satsuit T…</div>
          <div class="border-b border-r pl-[10px] leading-[34px]">Jakarta Barat</div>
          <div class="border-b border-r pl-[10px] leading-[34px] tracking-[0.640px]">13.10 Situasi arus lalu linta…</div>
          <div class="border-b pl-[10px] leading-[34px] tracking-[0.780px]"><div class="w-[134px] overflow-hidden">Jalan Aipda Karel Satsuit</div></div>
          <div class="border-r pl-[10px] leading-[34px] tracking-[0.800px]">Jalan Ancol Timur</div>
          <div class="border-r pl-[10px] leading-[34px]">Jakarta Utara</div>
          <div class="border-r pl-[10px] leading-[34px]">09.32 Situasi arus lalulinta…</div>
          <div class="pl-[10px] leading-[34px] tracking-[0.800px]">Jalan Ancol Timur</div>
        </div>
        <svg class="h-[103px] w-[21px] bg-[#f1f1f1]" viewBox="0 0 21 103"><path fill="#a3a3a3" d="M6 14l4.500-5 4.500 5z"/><path fill="#c1c1c1" d="M2 21h17v21H2z"/><path fill="#505050" d="M6 89l4.500 5 4.500-5z"/></svg>
        <svg class="h-[21px] w-[894px] bg-[#f1f1f1]" viewBox="0 0 894 21"><path fill="#a3a3a3" d="M13 5.500v10l-5-5z"/><path fill="#c1c1c1" d="M21 2h381v17H21z"/><path fill="#505050" d="M881 5.500v10l5-5z"/></svg>
        <div class="bg-[#dcdcdc]"></div>
      </div>
    </section>
  </div>
</main>

<script>
// Fills the basemap with a jittered street mesh, dense in the city and sparse around it.
let seed = 42;
const rnd = () => (seed = (seed * 16807) % 2147483647) / 2147483647;
function mesh(id, x0, y0, x1, y1, step, keep, inside) {
  const pts = [];
  for (let y = y0; y <= y1; y += step) {
    const row = [];
    for (let x = x0; x <= x1; x += step) row.push([x + (rnd() - .5) * step * .9, y + (rnd() - .5) * step * .9]);
    pts.push(row);
  }
  let d = '';
  const seg = (a, b) => {
    if (rnd() > keep || !inside(a) || !inside(b)) return;
    const mx = (a[0] + b[0]) / 2 + (rnd() - .5) * step * .25, my = (a[1] + b[1]) / 2 + (rnd() - .5) * step * .25;
    d += `M${a[0].toFixed(1)},${a[1].toFixed(1)}L${mx.toFixed(1)},${my.toFixed(1)}L${b[0].toFixed(1)},${b[1].toFixed(1)}`;
  };
  pts.forEach((row, j) => row.forEach((p, i) => {
    if (row[i + 1]) seg(p, row[i + 1]);
    if (pts[j + 1]) seg(p, pts[j + 1][i]);
  }));
  const path = document.createElementNS('http://www.w3.org/2000/svg', 'path');
  path.setAttribute('d', d);
  document.getElementById(id).append(path);
}
const city = ([x, y]) => x > 690 + Math.abs(y - 230) * .25 && x < 1060 - Math.max(0, y - 300) * .5 && y > 150;
mesh('rural', 440, 90, 1410, 580, 30, .45, ([x, y]) => !(Math.hypot(x - 672, y - 500) < 60));
mesh('rural', 700, 140, 1060, 470, 12, .35, city);
mesh('urban', 690, 140, 1060, 480, 12, .5, city);
</script>
</body>
</html>
